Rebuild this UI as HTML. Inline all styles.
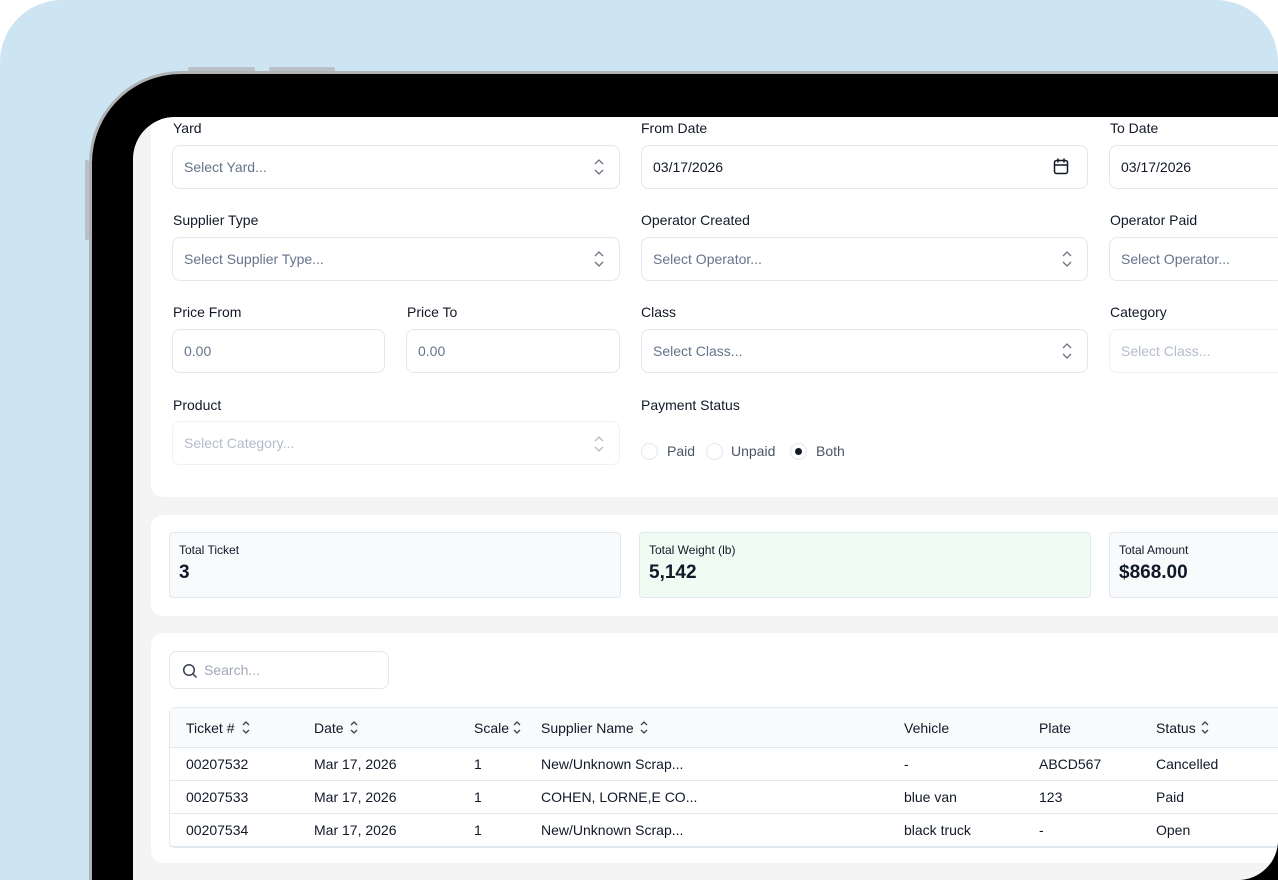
<!DOCTYPE html>
<html style="overflow:hidden"><head><meta charset="utf-8"><style>
*{box-sizing:border-box;margin:0;padding:0}
html,body{width:1278px;height:880px;overflow:hidden}
body{background:#fff;font-family:"Liberation Sans",sans-serif;color:#111827;position:relative}
.wrap{position:absolute;left:0;top:0;width:1278px;height:880px;overflow:hidden}
.bg{position:absolute;left:0;top:0;width:1278px;height:880px;background:#cde5f2;border-radius:62px 62px 0 0}
.btn{position:absolute;background:#b9bfc4;border-radius:2px}
.dev{position:absolute;left:89px;top:71px;width:1189px;height:809px;background:#000;border-radius:92px 0 0 0;border:3px solid #b0b3b6;border-right:0;border-bottom:0}
.scr{position:absolute;left:133px;top:117px;width:1145px;height:763px;background:#f4f4f5;border-radius:42px 0 40px 0;overflow:hidden}
.card{position:absolute;left:18px;width:1127px;background:#fff;border-radius:12px 0 0 12px}
.lab{position:absolute;font-size:14px;color:#111827}
.inp{position:absolute;height:44px;border:1px solid #e2e8f0;border-radius:8px;background:#fff;font-size:14px;color:#64748b;padding:0 11px;line-height:42px;overflow:hidden}
.inp.dis{color:#b4bcc8;border-color:#eef1f5}
.inp.val{color:#111827}
.stat{position:absolute;top:17px;height:66px;border:1px solid #e2e8f0;border-radius:4px;background:#f8fafc;padding:10px 9px}
.stat .t{font-size:12px;color:#111827}
.stat .v{font-size:19px;font-weight:bold;margin-top:5px}
.tbl{position:absolute;left:18px;top:74px;width:1109px;border:1px solid #e2e8f0;border-right:0;border-radius:6px 0 0 6px}
.row{position:relative;height:33px;border-bottom:1px solid #e2e8f0;font-size:14px}
.row.h{height:40px;background:#f8fafc}
.row span{position:absolute;top:8px}
.row.h span{top:12px}
.radio{position:absolute;top:443px;width:17px;height:17px;border:1px solid #e2e8f0;border-radius:50%}
</style></head><body><div class="wrap">
<div class="bg"></div>
<div class="btn" style="left:188px;top:67px;width:67px;height:4px"></div>
<div class="btn" style="left:269px;top:67px;width:66px;height:4px"></div>
<div class="btn" style="left:85px;top:160px;width:4px;height:80px"></div>
<div class="dev"></div>
<div class="scr">
 <div class="card" style="top:0;height:380px;border-radius:0 0 0 12px"></div>
 <div class="card" style="top:398px;height:101px">
  <div class="stat" style="left:18px;width:452px"><div class="t">Total Ticket</div><div class="v">3</div></div>
  <div class="stat" style="left:488px;width:452px;background:#effcf3"><div class="t">Total Weight (lb)</div><div class="v">5,142</div></div>
  <div class="stat" style="left:958px;width:169px;border-right:0;border-radius:4px 0 0 4px"><div class="t">Total Amount</div><div class="v">$868.00</div></div>
 </div>
 <div class="card" style="top:516px;height:230px">
  <div class="inp" style="left:18px;top:18px;width:220px;height:38px;line-height:36px;padding-left:34px;color:#a0a8b4">
   <svg style="position:absolute;left:12px;top:11px" width="16" height="16" viewBox="0 0 16 16" fill="none" stroke="#374151" stroke-width="1.5"><circle cx="7" cy="7" r="5.3"/><path d="M11 11l3.5 3.5"/></svg>Search...</div>
  <div class="tbl">
   <div class="row h"><span style="left:16px">Ticket #</span><span style="left:144px">Date</span><span style="left:304px">Scale</span><span style="left:371px">Supplier Name</span><span style="left:734px">Vehicle</span><span style="left:869px">Plate</span><span style="left:986px">Status</span></div>
   <div class="row"><span style="left:16px">00207532</span><span style="left:144px">Mar 17, 2026</span><span style="left:304px">1</span><span style="left:371px">New/Unknown Scrap...</span><span style="left:734px">-</span><span style="left:869px">ABCD567</span><span style="left:986px">Cancelled</span></div>
   <div class="row"><span style="left:16px">00207533</span><span style="left:144px">Mar 17, 2026</span><span style="left:304px">1</span><span style="left:371px">COHEN, LORNE,E CO...</span><span style="left:734px">blue van</span><span style="left:869px">123</span><span style="left:986px">Paid</span></div>
   <div class="row"><span style="left:16px">00207534</span><span style="left:144px">Mar 17, 2026</span><span style="left:304px">1</span><span style="left:371px">New/Unknown Scrap...</span><span style="left:734px">black truck</span><span style="left:869px">-</span><span style="left:986px">Open</span></div>
  </div>
 </div>
</div>
<svg style="position:absolute;left:0;top:0" width="1278" height="880" fill="none" stroke="#374151" stroke-width="1.3">
 <path d="M243 725l3-3 3 3M243 730l3 3 3-3"/>
 <path d="M351 725l3-3 3 3M351 730l3 3 3-3"/>
 <path d="M514 725l3-3 3 3M514 730l3 3 3-3"/>
 <path d="M641 725l3-3 3 3M641 730l3 3 3-3"/>
 <path d="M1202 725l3-3 3 3M1202 730l3 3 3-3"/>
</svg>
<div style="position:absolute;left:0;top:0;width:1278px;height:880px;overflow:hidden">
 <div class="lab" style="left:173px;top:120px">Yard</div>
 <div class="inp" style="left:172px;top:145px;width:448px">Select Yard...</div>
 <div class="lab" style="left:641px;top:120px">From Date</div>
 <div class="inp val" style="left:641px;top:145px;width:447px">03/17/2026</div>
 <div class="lab" style="left:1110px;top:120px">To Date</div>
 <div class="inp val" style="left:1109px;top:145px;width:175px">03/17/2026</div>
 <div class="lab" style="left:173px;top:212px">Supplier Type</div>
 <div class="inp" style="left:172px;top:237px;width:448px">Select Supplier Type...</div>
 <div class="lab" style="left:641px;top:212px">Operator Created</div>
 <div class="inp" style="left:641px;top:237px;width:447px">Select Operator...</div>
 <div class="lab" style="left:1110px;top:212px">Operator Paid</div>
 <div class="inp" style="left:1109px;top:237px;width:175px">Select Operator...</div>
 <div class="lab" style="left:173px;top:304px">Price From</div>
 <div class="inp" style="left:172px;top:329px;width:213px">0.00</div>
 <div class="lab" style="left:407px;top:304px">Price To</div>
 <div class="inp" style="left:406px;top:329px;width:214px">0.00</div>
 <div class="lab" style="left:641px;top:304px">Class</div>
 <div class="inp" style="left:641px;top:329px;width:447px">Select Class...</div>
 <div class="lab" style="left:1110px;top:304px">Category</div>
 <div class="inp dis" style="left:1109px;top:329px;width:175px">Select Class...</div>
 <div class="lab" style="left:173px;top:397px">Product</div>
 <div class="inp dis" style="left:172px;top:421px;width:448px">Select Category...</div>
 <div class="lab" style="left:641px;top:397px">Payment Status</div>
 <div class="radio" style="left:641px"></div><div class="lab" style="left:667px;top:443px;color:#4b5563">Paid</div>
 <div class="radio" style="left:706px"></div><div class="lab" style="left:731px;top:443px;color:#4b5563">Unpaid</div>
 <div class="radio" style="left:790px"><div style="position:absolute;left:4px;top:4px;width:7px;height:7px;border-radius:50%;background:#111827"></div></div><div class="lab" style="left:816px;top:443px;color:#4b5563">Both</div>
 <svg style="position:absolute;left:0;top:0" width="1278" height="880" fill="none" stroke="#6b7280" stroke-width="1.3">
  <path d="M595 164l4-4 4 4M595 170l4 4 4-4"/>
  <path d="M595 256l4-4 4 4M595 262l4 4 4-4"/>
  <path d="M1063 256l4-4 4 4M1063 262l4 4 4-4"/>
  <path d="M1063 348l4-4 4 4M1063 354l4 4 4-4"/>
  <path d="M595 441l4-4 4 4M595 447l4 4 4-4" stroke="#b4bcc8"/>
  <g stroke="#111827" stroke-width="1.5"><rect x="1054.5" y="160.5" width="13" height="13" rx="2"/><path d="M1054.5 165h13M1058 158.5v4M1064 158.5v4"/></g>
 </svg>
</div>
</div></body></html>
